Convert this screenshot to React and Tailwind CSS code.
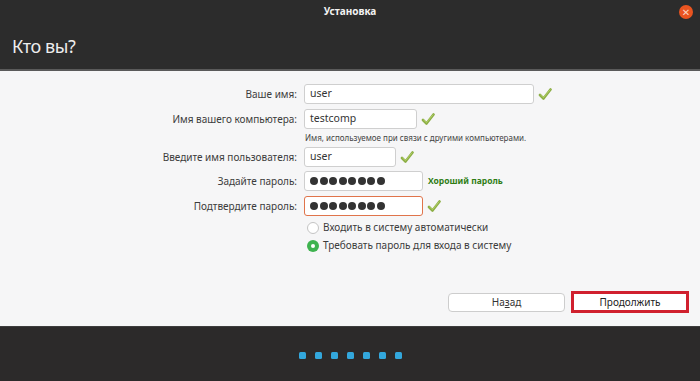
import React from "react";

const FONT = { fontFamily: '"Noto Sans", "DejaVu Sans", sans-serif' };

function Check() {
  return (
    <svg width="14" height="14" viewBox="0 0 14 14" className="shrink-0">
      <path d="M2 8 L5.5 11.5 L12.5 2.5" fill="none" stroke="#8cae45" strokeWidth="2.6" strokeLinecap="round" strokeLinejoin="round" />
      <path d="M2.6 8 L5.5 10.6 L12 2.8" fill="none" stroke="#b5d36a" strokeWidth="0.9" strokeLinecap="round" strokeLinejoin="round" />
    </svg>
  );
}

function Field({ label, value, width, check, password, focused, extra }) {
  return (
    <div className="flex items-center h-[20px]">
      <div className="w-[298px] text-right pr-[1px] text-[10px] text-[#3c3c3c]">{label}</div>
      <div
        className={`ml-[6px] h-[20px] rounded-[3px] bg-white flex items-center px-[5px] border ${
          focused ? "border-[#e0744b]" : "border-[#cfcfcf]"
        }`}
        style={{ width }}
      >
        {password ? (
          <span className="flex gap-[1.5px]">
            {Array.from({ length: 8 }).map((_, i) => (
              <span key={i} className="w-[8px] h-[8px] rounded-full bg-[#333]" />
            ))}
          </span>
        ) : (
          <span className="text-[10.5px] text-[#333]">{value}</span>
        )}
      </div>
      {check && <span className="ml-[4px]"><Check /></span>}
      {extra}
    </div>
  );
}

export default function App() {
  return (
    <div className="w-[700px] h-[381px] flex flex-col overflow-hidden bg-[#f6f6f7]" style={FONT}>
      {/* Header */}
      <div className="h-[69px] bg-[#2c2c2c] flex flex-col shrink-0">
        <div className="h-[22px] grid grid-cols-[1fr_auto_1fr] items-center">
          <div />
          <div className="text-[10px] font-bold text-[#f2f2f2] pt-[1px]">Установка</div>
          <div className="flex justify-end pr-[7px] pt-[1px]">
            <div className="w-[14px] h-[14px] rounded-full bg-[#e95420] flex items-center justify-center text-[#fbd3c2] text-[10px] leading-none">
              ✕
            </div>
          </div>
        </div>
        <div className="pl-[12px] pt-[15px] text-[18px] tracking-[-0.4px] text-[#ededed] leading-none">Кто вы?</div>
      </div>
      <div className="h-[2px] bg-[#5a5a5a] shrink-0" />

      {/* Content */}
      <div className="flex-1 flex flex-col pt-[13px]">
        <Field label="Ваше имя:" value="user" width={230} check />
        <div className="h-[5px]" />
        <Field label="Имя вашего компьютера:" value="testcomp" width={113} check />
        <div className="pl-[305px] text-[8px] text-[#444] h-[18px] flex items-center">
          Имя, используемое при связи с другими компьютерами.
        </div>
        <Field label="Введите имя пользователя:" value="user" width={92} check />
        <div className="h-[4px]" />
        <Field
          label="Задайте пароль:"
          width={119}
          password
          extra={<span className="ml-[5px] text-[8.5px] font-bold text-[#2f7d14]">Хороший пароль</span>}
        />
        <div className="h-[5px]" />
        <Field label="Подтвердите пароль:" width={119} password focused check />

        <div className="pl-[307px] mt-[5px] flex flex-col gap-[5px]">
          <div className="flex items-center gap-[4px] h-[13px]">
            <span className="w-[12px] h-[12px] rounded-full bg-white border border-[#c4c4c4]" />
            <span className="text-[10px] text-[#3c3c3c]">Входить в систему автоматически</span>
          </div>
          <div className="flex items-center gap-[4px] h-[13px]">
            <span className="w-[12px] h-[12px] rounded-full bg-[#3eb34f] flex items-center justify-center">
              <span className="w-[4px] h-[4px] rounded-full bg-white" />
            </span>
            <span className="text-[10px] text-[#3c3c3c]">Требовать пароль для входа в систему</span>
          </div>
        </div>

        <div className="flex-1" />
        <div className="flex justify-end items-center gap-[6px] pr-[11px] pb-[13px]">
          <button className="w-[117px] h-[19px] bg-white border border-[#cdcdcd] rounded-[4px] text-[10px] text-[#333]">
            На<span className="underline">з</span>ад
          </button>
          <div className="w-[118px] h-[22px] border-[3px] border-[#d0202e] bg-white flex items-center justify-center">
            <span className="text-[10px] text-[#222]">Продолжить</span>
          </div>
        </div>
      </div>

      {/* Footer */}
      <div className="h-[55px] bg-[#2c2a2a] border-t border-[#3d3d3d] shrink-0 flex items-center justify-center">
        <div className="flex gap-[9px] pt-[2px] pl-[1px]">
          {Array.from({ length: 7 }).map((_, i) => (
            <span key={i} className="w-[7px] h-[7px] rounded-[1.5px] bg-[#33a7dc]" />
          ))}
        </div>
      </div>
    </div>
  );
}
